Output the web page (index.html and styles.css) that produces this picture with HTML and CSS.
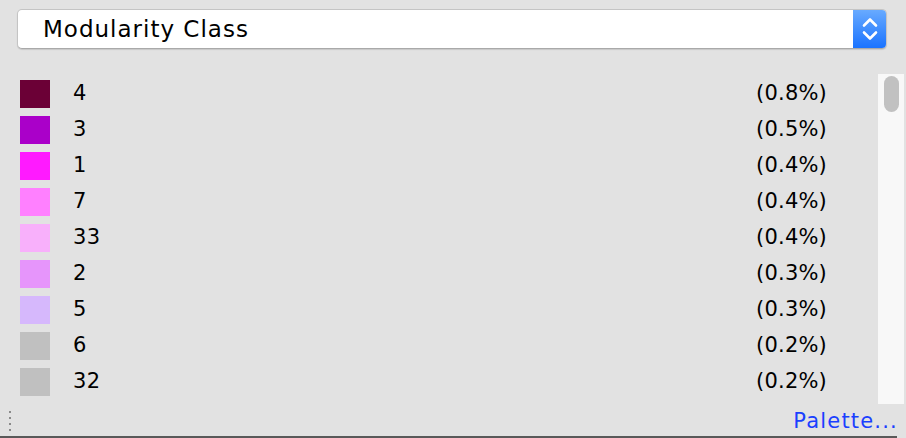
FILE: index.html
```html
<html>
<head>
  <meta charset="utf-8">
  <title>Partition</title>
  <link rel="stylesheet" href="styles.css">
</head>
<body>
  <div class="panel">
    <div class="combo">
      <span class="combo-label">Modularity Class</span>
      <span class="stepper">
        <svg width="18" height="28" viewBox="0 0 18 28">
          <path d="M3 10.5 L9 4.5 L15 10.5" fill="none" stroke="white" stroke-width="2.6" stroke-linecap="round" stroke-linejoin="round"/>
          <path d="M3 17.5 L9 23.5 L15 17.5" fill="none" stroke="white" stroke-width="2.6" stroke-linecap="round" stroke-linejoin="round"/>
        </svg>
      </span>
    </div>

    <div class="list-area">
      <div class="list">
        <div class="row"><span class="swatch" style="background:#6b0036"></span><span class="name">4</span><span class="pct">(0.8%)</span></div>
        <div class="row"><span class="swatch" style="background:#aa00c9"></span><span class="name">3</span><span class="pct">(0.5%)</span></div>
        <div class="row"><span class="swatch" style="background:#ff1aff"></span><span class="name">1</span><span class="pct">(0.4%)</span></div>
        <div class="row"><span class="swatch" style="background:#ff80ff"></span><span class="name">7</span><span class="pct">(0.4%)</span></div>
        <div class="row"><span class="swatch" style="background:#f8b0fb"></span><span class="name">33</span><span class="pct">(0.4%)</span></div>
        <div class="row"><span class="swatch" style="background:#e695fb"></span><span class="name">2</span><span class="pct">(0.3%)</span></div>
        <div class="row"><span class="swatch" style="background:#d6b8fc"></span><span class="name">5</span><span class="pct">(0.3%)</span></div>
        <div class="row"><span class="swatch" style="background:#c0c0c0"></span><span class="name">6</span><span class="pct">(0.2%)</span></div>
        <div class="row"><span class="swatch" style="background:#c0c0c0"></span><span class="name">32</span><span class="pct">(0.2%)</span></div>
        <div class="row"><span class="swatch" style="background:#c0c0c0"></span></div>
      </div>
      <div class="scrollbar"><div class="thumb"></div></div>
    </div>

    <div class="footer">
      <div class="grip"><i></i><i></i><i></i><i></i></div>
      <a href="#" class="palette-link">Palette...</a>
    </div>
    <div class="bottom-line"></div>
  </div>
</body>
</html>
```

FILE: styles.css
```css
body {
  margin: 0;
  background: #e2e2e2;
  font-family: "DejaVu Sans", "Liberation Sans", sans-serif;
  color: #000;
  width: 906px;
  height: 438px;
  overflow: hidden;
}
.panel {
  display: flex;
  flex-direction: column;
  height: 438px;
}
.combo {
  margin: 9px 19px 0 17px;
  height: 38px;
  background: #fff;
  border: 1px solid #c4c4c4;
  border-bottom-color: #a9a9a9;
  border-radius: 5px;
  box-shadow: 0 1px 1px rgba(0, 0, 0, 0.12);
  display: flex;
  align-items: center;
  overflow: hidden;
}
.combo-label {
  flex: 1;
  padding-left: 25px;
  font-size: 23px;
  letter-spacing: 1px;
  margin-top: -1px;
}
.stepper {
  width: 33px;
  height: 100%;
  background: linear-gradient(#68aaff, #1a73ff);
  display: flex;
  align-items: center;
  justify-content: center;
}
.list-area {
  margin-top: 25px;
  height: 330px;
  display: flex;
}
.list {
  flex: 1;
  padding-top: 4px;
  overflow: hidden;
}
.row {
  height: 36px;
  display: flex;
  align-items: center;
  font-size: 21px;
  line-height: 24px;
}
.swatch {
  width: 30px;
  height: 28px;
  margin-left: 20px;
  margin-top: -4px;
}
.name {
  margin-left: 23px;
  margin-top: -6px;
  flex: 1;
  letter-spacing: 0.5px;
}
.pct {
  margin-right: 51px;
  margin-top: -6px;
  letter-spacing: 0.2px;
}
.scrollbar {
  width: 26px;
  margin-right: 2px;
  background: #f8f8f8;
  padding-top: 2px;
}
.thumb {
  width: 15px;
  height: 36px;
  margin-left: 6px;
  background: #c1c1c1;
  border-radius: 8px;
}
.footer {
  height: 32px;
  display: flex;
  align-items: center;
}
.grip {
  display: flex;
  flex-direction: column;
  gap: 4px;
  margin-left: 9px;
  margin-top: 2px;
}
.grip i {
  width: 2px;
  height: 2px;
  background: #8a8a8a;
}
.palette-link {
  margin-left: auto;
  margin-right: 8px;
  margin-top: 2px;
  color: #1a40ff;
  text-decoration: none;
  font-size: 21px;
  line-height: 24px;
  letter-spacing: 1.2px;
}
.bottom-line {
  height: 2px;
  width: 897px;
  background: #595959;
}
```
